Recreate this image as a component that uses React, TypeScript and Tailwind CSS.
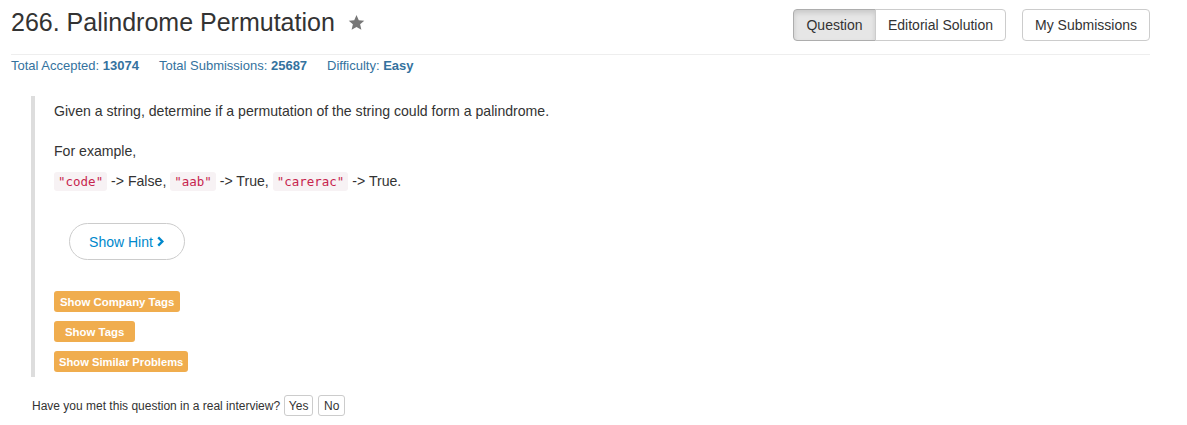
import React from "react";

const font = { fontFamily: '"Liberation Sans", Arial, sans-serif' };

function Code({ children }: { children: React.ReactNode }) {
  return (
    <code
      className="rounded-[3px] bg-[#f7f2f4] px-[4px] py-[2px] text-[12.5px] text-[#c7254e]"
      style={{ fontFamily: '"DejaVu Sans Mono", "Liberation Mono", monospace' }}
    >
      {children}
    </code>
  );
}

export default function App() {
  return (
    <div className="min-h-[425px] w-[1187px] bg-white text-[#333]" style={font}>
      <div className="ml-[11px] w-[1139px]">
        <div className="flex h-[50px] items-start justify-between">
          <div className="flex items-center pt-[7px]">
            <h3 className="text-[25px] font-medium leading-[30px] text-[#333]">266. Palindrome Permutation</h3>
            <svg className="ml-[13px] mt-[1px]" width="17" height="17" viewBox="0 0 24 24">
              <path
                fill="#777"
                d="M12 1.5l3.2 7.2 7.8.7-5.9 5.2 1.8 7.7L12 18.3l-6.9 4 1.8-7.7L1 9.4l7.8-.7z"
              />
            </svg>
          </div>
          <div className="flex pt-[9px]">
            <div className="flex">
              <button className="h-[32px] w-[83px] rounded-l-[4px] border border-[#adadad] bg-[#e6e6e6] text-[14px] text-[#333] shadow-[inset_0_3px_5px_rgba(0,0,0,0.125)]">
                Question
              </button>
              <button className="-ml-px h-[32px] w-[131px] rounded-r-[4px] border border-[#ccc] bg-white text-[14px] text-[#333]">
                Editorial Solution
              </button>
            </div>
            <button className="ml-[16px] h-[32px] w-[128px] rounded-[4px] border border-[#ccc] bg-white text-[14px] text-[#333]">
              My Submissions
            </button>
          </div>
        </div>
        <div className="mt-[4px] border-t border-[#eee]" />
        <div className="mt-[2px] flex gap-[20px] text-[13px] leading-[17px] text-[#34729e]">
          <span>
            Total Accepted: <b>13074</b>
          </span>
          <span>
            Total Submissions: <b>25687</b>
          </span>
          <span>
            Difficulty: <b>Easy</b>
          </span>
        </div>

        <div className="ml-[20px] mt-[22px] border-l-[4px] border-[#ddd] pb-[5px] pl-[19px] pt-[5px] text-[14.1px] leading-[20px]">
          <p>Given a string, determine if a permutation of the string could form a palindrome.</p>
          <p className="mt-[20px]">For example,</p>
          <p className="mt-[10px]">
            <Code>"code"</Code> -&gt; False, <Code>"aab"</Code> -&gt; True, <Code>"carerac"</Code> -&gt; True.
          </p>
          <button className="ml-[15px] mt-[31px] flex h-[37px] w-[116px] items-center justify-center rounded-full border border-[#ccc] bg-white text-[14px] text-[#0088cc]">
            Show Hint
            <svg className="ml-[3px]" width="9" height="11" viewBox="0 0 9 12">
              <path d="M2 1.5l4.5 4.5L2 10.5" fill="none" stroke="#0088cc" strokeWidth="2.6" />
            </svg>
          </button>
          <div className="mt-[31px] flex flex-col items-start gap-[9px]">
            <span className="flex h-[21px] items-center rounded-[3px] bg-[#f0ad4e] px-[6px] text-[11.4px] font-bold text-white">
              Show Company Tags
            </span>
            <span className="flex h-[21px] items-center rounded-[3px] bg-[#f0ad4e] px-[11px] text-[11.4px] font-bold text-white">
              Show Tags
            </span>
            <span className="flex h-[21px] items-center rounded-[3px] bg-[#f0ad4e] px-[5px] text-[11.2px] font-bold text-white">
              Show Similar Problems
            </span>
          </div>
        </div>

        <div className="ml-[21px] mt-[18px] flex items-center text-[12px] text-[#333]">
          <span>Have you met this question in a real interview?</span>
          <button className="ml-[4px] h-[21px] w-[29px] rounded-[3px] border border-[#ccc] bg-white text-[12px]">Yes</button>
          <button className="ml-[5px] h-[21px] w-[27px] rounded-[3px] border border-[#ccc] bg-white text-[12px]">No</button>
        </div>
      </div>
    </div>
  );
}
